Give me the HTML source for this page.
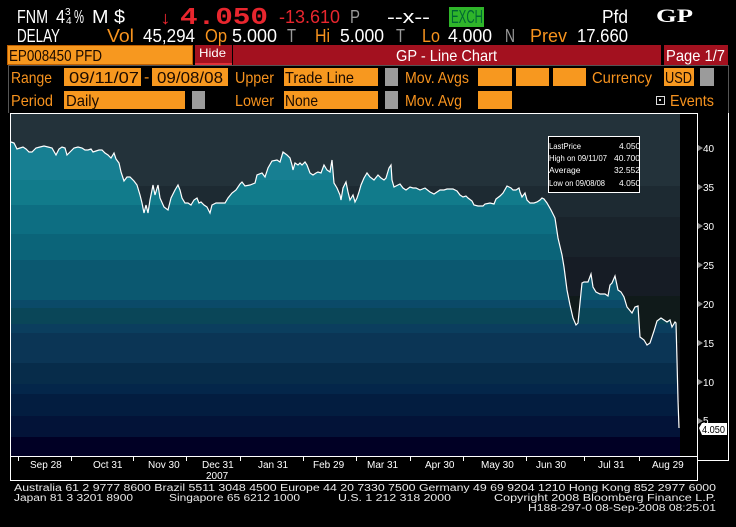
<!DOCTYPE html>
<html><head><meta charset="utf-8"><style>
body{margin:0;background:#000;width:736px;height:527px;overflow:hidden;position:relative;font-family:"Liberation Sans",sans-serif;}
.box{position:absolute;background:#f7981f;height:18px}
.gy{position:absolute;background:#9b9b9b;height:18px}
.bk{position:absolute;background:#000;height:18px}
svg{position:absolute;left:0;top:0}
</style></head><body>
<div style="position:absolute;left:449px;top:7px;width:35px;height:20px;background:#2fb52a"></div>
<div style="position:absolute;left:7px;top:45px;width:186px;height:20px;background:#f7981f;border:1px solid #c06000;box-sizing:border-box"></div>
<div style="position:absolute;left:195px;top:45px;width:37px;height:20px;background:#a3111f;border-bottom:2px solid #e0303a;box-sizing:border-box"></div>
<div style="position:absolute;left:233px;top:45px;width:428px;height:20px;background:#a3111f"></div>
<div style="position:absolute;left:664px;top:45px;width:64px;height:20px;background:#a3111f"></div>
<div style="position:absolute;left:8px;top:65px;width:721px;height:48px;border:1px solid #555;border-bottom:none;box-sizing:border-box"></div>
<div class="box" style="left:64px;top:68px;width:77px"></div>
<div class="box" style="left:152px;top:68px;width:76px"></div>
<div class="box" style="left:284px;top:68px;width:94px"></div>
<div class="bk" style="left:378px;top:68px;width:7px"></div><div class="gy" style="left:385px;top:68px;width:13px"></div>
<div class="box" style="left:478px;top:68px;width:34px"></div>
<div class="box" style="left:516px;top:68px;width:33px"></div>
<div class="box" style="left:553px;top:68px;width:33px"></div>
<div class="box" style="left:664px;top:68px;width:30px"></div>
<div class="bk" style="left:694px;top:68px;width:6px"></div><div class="gy" style="left:700px;top:68px;width:14px"></div>
<div class="box" style="left:64px;top:91px;width:121px"></div>
<div class="bk" style="left:185px;top:91px;width:7px"></div><div class="gy" style="left:192px;top:91px;width:13px"></div>
<div class="box" style="left:284px;top:91px;width:94px"></div>
<div class="bk" style="left:378px;top:91px;width:7px"></div><div class="gy" style="left:385px;top:91px;width:13px"></div>
<div class="box" style="left:478px;top:91px;width:34px"></div>
<div style="position:absolute;left:656px;top:96px;width:7px;height:7px;border:1px solid #ddd"></div>
<div style="position:absolute;left:659px;top:99px;width:2px;height:2px;background:#ddd"></div>

<svg width="736" height="527">
<g font-family="Liberation Sans, sans-serif" font-size="18" fill="#fff" lengthAdjust="spacingAndGlyphs">
<text x="17" y="23" textLength="31" lengthAdjust="spacingAndGlyphs">FNM</text>
<text x="56" y="23" textLength="9" lengthAdjust="spacingAndGlyphs">4</text>
<text x="65" y="15" font-size="10">3</text>
<text x="66" y="24" font-size="10">4</text>
<text x="74" y="23" textLength="10" lengthAdjust="spacingAndGlyphs">%</text>
<text x="92" y="23" textLength="33" lengthAdjust="spacingAndGlyphs">M $</text>
<text x="160" y="24" textLength="11" lengthAdjust="spacingAndGlyphs" fill="#e8262e">↓</text>
<text x="180" y="24" font-size="24" font-weight="bold" font-family="Liberation Mono, monospace" textLength="88" lengthAdjust="spacingAndGlyphs" fill="#e8262e">4.050</text>
<text x="279" y="23" textLength="61" lengthAdjust="spacingAndGlyphs" fill="#e8262e">-13.610</text>
<text x="350" y="23" textLength="10" lengthAdjust="spacingAndGlyphs" fill="#9a9a9a">P</text>
<text x="387" y="23" textLength="43" lengthAdjust="spacingAndGlyphs">--x--</text>
<text x="451" y="23" textLength="32" lengthAdjust="spacingAndGlyphs" fill="#063">EXCH</text>
<text x="602" y="23" textLength="26" lengthAdjust="spacingAndGlyphs">Pfd</text>
<text x="656" y="22" font-family="Liberation Serif, serif" font-weight="bold" font-size="19" textLength="37" lengthAdjust="spacingAndGlyphs">GP</text>

<text x="17" y="42" textLength="43" lengthAdjust="spacingAndGlyphs">DELAY</text>
<text x="107" y="42" textLength="27" lengthAdjust="spacingAndGlyphs" fill="#f7931e">Vol</text>
<text x="143" y="42" textLength="52" lengthAdjust="spacingAndGlyphs">45,294</text>
<text x="205" y="42" textLength="22" lengthAdjust="spacingAndGlyphs" fill="#f7931e">Op</text>
<text x="232" y="42" textLength="45" lengthAdjust="spacingAndGlyphs">5.000</text>
<text x="287" y="42" textLength="9" lengthAdjust="spacingAndGlyphs" fill="#9a9a9a">T</text>
<text x="315" y="42" textLength="15" lengthAdjust="spacingAndGlyphs" fill="#f7931e">Hi</text>
<text x="340" y="42" textLength="44" lengthAdjust="spacingAndGlyphs">5.000</text>
<text x="396" y="42" textLength="9" lengthAdjust="spacingAndGlyphs" fill="#9a9a9a">T</text>
<text x="422" y="42" textLength="18" lengthAdjust="spacingAndGlyphs" fill="#f7931e">Lo</text>
<text x="448" y="42" textLength="44" lengthAdjust="spacingAndGlyphs">4.000</text>
<text x="505" y="42" textLength="10" lengthAdjust="spacingAndGlyphs" fill="#9a9a9a">N</text>
<text x="530" y="42" textLength="37" lengthAdjust="spacingAndGlyphs" fill="#f7931e">Prev</text>
<text x="577" y="42" textLength="51" lengthAdjust="spacingAndGlyphs">17.660</text>

<text x="9" y="61" font-size="16" textLength="93" lengthAdjust="spacingAndGlyphs" fill="#1a0a00">EP008450 PFD</text>
<text x="199" y="57" font-size="12" textLength="27" lengthAdjust="spacingAndGlyphs">Hide</text>
<text x="396" y="61" font-size="16" textLength="101" lengthAdjust="spacingAndGlyphs">GP - Line Chart</text>
<text x="666" y="61" font-size="16" textLength="59" lengthAdjust="spacingAndGlyphs">Page 1/7</text>

<g font-size="16">
<text x="11" y="83" textLength="41" lengthAdjust="spacingAndGlyphs" fill="#f7931e">Range</text>
<text x="69" y="83" textLength="70" lengthAdjust="spacingAndGlyphs" fill="#1a0a00">09/11/07</text>
<text x="144" y="82" fill="#f7931e">-</text>
<text x="157" y="83" textLength="66" lengthAdjust="spacingAndGlyphs" fill="#1a0a00">09/08/08</text>
<text x="235" y="83" textLength="39" lengthAdjust="spacingAndGlyphs" fill="#f7931e">Upper</text>
<text x="285" y="83" textLength="69" lengthAdjust="spacingAndGlyphs" fill="#1a0a00">Trade Line</text>
<text x="405" y="83" textLength="64" lengthAdjust="spacingAndGlyphs" fill="#f7931e">Mov. Avgs</text>
<text x="592" y="83" textLength="60" lengthAdjust="spacingAndGlyphs" fill="#f7931e">Currency</text>
<text x="665" y="83" textLength="27" lengthAdjust="spacingAndGlyphs" fill="#1a0a00">USD</text>
<text x="11" y="106" textLength="42" lengthAdjust="spacingAndGlyphs" fill="#f7931e">Period</text>
<text x="66" y="106" textLength="33" lengthAdjust="spacingAndGlyphs" fill="#1a0a00">Daily</text>
<text x="235" y="106" textLength="39" lengthAdjust="spacingAndGlyphs" fill="#f7931e">Lower</text>
<text x="285" y="106" textLength="33" lengthAdjust="spacingAndGlyphs" fill="#1a0a00">None</text>
<text x="405" y="106" textLength="57" lengthAdjust="spacingAndGlyphs" fill="#f7931e">Mov. Avg</text>
<text x="670" y="106" textLength="44" lengthAdjust="spacingAndGlyphs" fill="#f7931e">Events</text>
</g>
</g>

<defs><clipPath id="c"><polygon points="11,142 14,143 17,149 20,148 23,147 26,149 29,152 32,152 36,148 40,147 44,146 48,147 52,148 56,155 59,149 62,147 65,148 67,155 70,152 74,148 78,147 82,148 85,150 88,150 91,149 93,152 96,151 99,150 102,150 105,153 108,155 111,158 114,153 116,159 119,163 121,172 124,181 127,177 130,177 134,181 137,185 140,195 142,203 144,213 146,205 148,213 150,200 153,185 155,195 158,185 160,198 164,207 168,210 171,198 175,190 178,185 180,190 182,198 185,203 188,203 191,205 194,200 197,198 199,203 201,202 204,205 207,207 210,213 212,205 216,203 225,203 228,198 232,193 236,190 240,184 242,182 245,186 250,185 255,183 257,175 262,173 265,177 268,168 272,161 277,160 280,162 283,152 287,155 290,158 292,165 293,170 295,163 298,165 300,163 302,165 305,162 307,165 310,173 313,175 316,173 318,172 321,173 324,165 327,170 330,172 332,160 334,183 337,188 340,195 341,200 343,188 346,182 348,192 350,200 353,195 355,202 357,198 359,192 361,185 364,178 367,173 370,177 374,180 378,175 381,178 384,180 386,178 389,168 391,165 392,180 394,187 396,186 400,184 403,188 406,190 410,187 413,188 416,188 420,190 425,188 430,192 434,194 437,192 440,190 444,190 447,189 453,189 457,191 460,195 463,197 466,196 468,198 472,201 474,205 478,206 483,206 485,204 490,203 494,204 496,199 500,196 503,193 507,186 511,188 513,190 516,190 519,188 520,192 522,197 525,193 527,200 530,203 534,203 537,202 540,200 542,198 544,199 547,203 551,210 555,218 558,238 562,255 564,267 567,290 570,305 573,318 576,325 578,323 582,283 584,282 588,282 591,274 593,287 596,292 600,294 605,294 608,296 610,285 612,283 615,276 618,290 621,292 624,297 627,307 632,313 635,307 638,306 640,337 644,340 647,345 650,343 654,331 657,321 661,318 664,320 667,322 670,320 672,327 675,322 676,323 677,360 678,400 679,428 680,428 680,456 11,456"/></clipPath></defs>
<g>
<rect x="11" y="114" width="669" height="72" fill="#23323a"/>
<rect x="11" y="186" width="669" height="31" fill="#1d2a32"/>
<rect x="11" y="217" width="669" height="40" fill="#19232b"/>
<rect x="11" y="257" width="669" height="39" fill="#161c25"/>
<rect x="11" y="296" width="669" height="47" fill="#101a1a"/>
<rect x="11" y="343" width="669" height="39" fill="#0e1016"/>
<rect x="11" y="382" width="669" height="20" fill="#0b0b15"/>
<rect x="11" y="402" width="669" height="54" fill="#030305"/>
</g>
<g clip-path="url(#c)">
<rect x="11" y="114" width="669" height="66" fill="#177f92"/>
<rect x="11" y="180" width="669" height="25" fill="#117b8b"/>
<rect x="11" y="205" width="669" height="29" fill="#0d6e82"/>
<rect x="11" y="234" width="669" height="26" fill="#0b6479"/>
<rect x="11" y="260" width="669" height="40" fill="#0b5870"/>
<rect x="11" y="300" width="669" height="8" fill="#0b4a68"/>
<rect x="11" y="308" width="669" height="16" fill="#0a4658"/>
<rect x="11" y="324" width="669" height="9" fill="#0b3e5e"/>
<rect x="11" y="333" width="669" height="30" fill="#0b3555"/>
<rect x="11" y="363" width="669" height="21" fill="#072c4a"/>
<rect x="11" y="384" width="669" height="10" fill="#04264a"/>
<rect x="11" y="394" width="669" height="22" fill="#031d40"/>
<rect x="11" y="416" width="669" height="21" fill="#031338"/>
<rect x="11" y="437" width="669" height="19" fill="#010025"/>
</g>
<polyline fill="none" stroke="#fff" stroke-width="1.2" points="11,142 14,143 17,149 20,148 23,147 26,149 29,152 32,152 36,148 40,147 44,146 48,147 52,148 56,155 59,149 62,147 65,148 67,155 70,152 74,148 78,147 82,148 85,150 88,150 91,149 93,152 96,151 99,150 102,150 105,153 108,155 111,158 114,153 116,159 119,163 121,172 124,181 127,177 130,177 134,181 137,185 140,195 142,203 144,213 146,205 148,213 150,200 153,185 155,195 158,185 160,198 164,207 168,210 171,198 175,190 178,185 180,190 182,198 185,203 188,203 191,205 194,200 197,198 199,203 201,202 204,205 207,207 210,213 212,205 216,203 225,203 228,198 232,193 236,190 240,184 242,182 245,186 250,185 255,183 257,175 262,173 265,177 268,168 272,161 277,160 280,162 283,152 287,155 290,158 292,165 293,170 295,163 298,165 300,163 302,165 305,162 307,165 310,173 313,175 316,173 318,172 321,173 324,165 327,170 330,172 332,160 334,183 337,188 340,195 341,200 343,188 346,182 348,192 350,200 353,195 355,202 357,198 359,192 361,185 364,178 367,173 370,177 374,180 378,175 381,178 384,180 386,178 389,168 391,165 392,180 394,187 396,186 400,184 403,188 406,190 410,187 413,188 416,188 420,190 425,188 430,192 434,194 437,192 440,190 444,190 447,189 453,189 457,191 460,195 463,197 466,196 468,198 472,201 474,205 478,206 483,206 485,204 490,203 494,204 496,199 500,196 503,193 507,186 511,188 513,190 516,190 519,188 520,192 522,197 525,193 527,200 530,203 534,203 537,202 540,200 542,198 544,199 547,203 551,210 555,218 558,238 562,255 564,267 567,290 570,305 573,318 576,325 578,323 582,283 584,282 588,282 591,274 593,287 596,292 600,294 605,294 608,296 610,285 612,283 615,276 618,290 621,292 624,297 627,307 632,313 635,307 638,306 640,337 644,340 647,345 650,343 654,331 657,321 661,318 664,320 667,322 670,320 672,327 675,322 676,323 677,360 678,400 679,428"/>
<line x1="10.5" y1="113" x2="10.5" y2="481" stroke="#fff"/>
<line x1="10" y1="113.5" x2="697" y2="113.5" stroke="#fff"/>
<line x1="10" y1="456.5" x2="697" y2="456.5" stroke="#fff"/>
<line x1="10" y1="480.5" x2="697" y2="480.5" stroke="#fff"/>
<line x1="697.5" y1="113" x2="697.5" y2="481" stroke="#fff"/>
<line x1="728.5" y1="113" x2="728.5" y2="461" stroke="#fff"/>
<line x1="697" y1="460.5" x2="729" y2="460.5" stroke="#fff"/>
<g stroke="#fff">
<line x1="18.5" y1="457" x2="18.5" y2="461"/><line x1="71.5" y1="457" x2="71.5" y2="461"/><line x1="133.5" y1="457" x2="133.5" y2="461"/><line x1="186.5" y1="457" x2="186.5" y2="461"/><line x1="240.5" y1="457" x2="240.5" y2="461"/><line x1="303.5" y1="457" x2="303.5" y2="461"/><line x1="356.5" y1="457" x2="356.5" y2="461"/><line x1="410.5" y1="457" x2="410.5" y2="461"/><line x1="463.5" y1="457" x2="463.5" y2="461"/><line x1="526.5" y1="457" x2="526.5" y2="461"/><line x1="584.5" y1="457" x2="584.5" y2="461"/><line x1="639.5" y1="457" x2="639.5" y2="461"/>
</g>
<g font-family="Liberation Sans, sans-serif" font-size="10" fill="#fff">
<text x="30" y="468">Sep 28</text><text x="93" y="468">Oct 31</text><text x="148" y="468">Nov 30</text><text x="202" y="468">Dec 31</text><text x="258" y="468">Jan 31</text><text x="313" y="468">Feb 29</text><text x="367" y="468">Mar 31</text><text x="425" y="468">Apr 30</text><text x="481" y="468">May 30</text><text x="536" y="468">Jun 30</text><text x="598" y="468">Jul 31</text><text x="652" y="468">Aug 29</text>
<text x="206" y="479">2007</text>
</g>
<g font-family="Liberation Sans, sans-serif" font-size="10" fill="#fff">
<text x="703" y="152">40</text><text x="703" y="191">35</text><text x="703" y="230">30</text><text x="703" y="269">25</text><text x="703" y="308">20</text><text x="703" y="347">15</text><text x="703" y="386">10</text><text x="703" y="424">5</text>
</g>
<g fill="#888">
<polygon points="698,145 703,148 698,151"/><polygon points="698,184 703,187 698,190"/><polygon points="698,223 703,226 698,229"/><polygon points="698,262 703,265 698,268"/><polygon points="698,301 703,304 698,307"/><polygon points="698,340 703,343 698,346"/><polygon points="698,379 703,382 698,385"/><polygon points="698,418 703,421 698,424"/>
</g>
<polygon points="699,428 702,423 727,423 727,435 702,435" fill="#fff"/>
<text x="702" y="433" font-family="Liberation Sans, sans-serif" font-size="10" textLength="23" lengthAdjust="spacingAndGlyphs" fill="#000">4.050</text>
<rect x="548.5" y="136.5" width="91" height="56" fill="#000" stroke="#fff"/>
<g font-family="Liberation Sans, sans-serif" font-size="8.5" fill="#fff">
<text x="549" y="149" textLength="32" lengthAdjust="spacingAndGlyphs">LastPrice</text><text x="619" y="149">4.050</text>
<text x="549" y="161" textLength="58" lengthAdjust="spacingAndGlyphs">High on 09/11/07</text><text x="614" y="161">40.700</text>
<text x="549" y="173">Average</text><text x="614" y="173">32.552</text>
<text x="549" y="186" textLength="56" lengthAdjust="spacingAndGlyphs">Low on 09/08/08</text><text x="619" y="186">4.050</text>
</g>
<g font-family="Liberation Sans, sans-serif" font-size="10" fill="#e8e8e8">
<text x="14" y="491" textLength="702" lengthAdjust="spacingAndGlyphs">Australia 61 2 9777 8600 Brazil 5511 3048 4500 Europe 44 20 7330 7500 Germany 49 69 9204 1210 Hong Kong 852 2977 6000</text>
<text x="14" y="501" textLength="119" lengthAdjust="spacingAndGlyphs">Japan 81 3 3201 8900</text>
<text x="169" y="501" textLength="131" lengthAdjust="spacingAndGlyphs">Singapore 65 6212 1000</text>
<text x="338" y="501" textLength="113" lengthAdjust="spacingAndGlyphs">U.S. 1 212 318 2000</text>
<text x="494" y="501" textLength="222" lengthAdjust="spacingAndGlyphs">Copyright 2008 Bloomberg Finance L.P.</text>
<text x="528" y="511" textLength="188" lengthAdjust="spacingAndGlyphs">H188-297-0 08-Sep-2008 08:25:01</text>
</g>
</svg>
</body></html>
